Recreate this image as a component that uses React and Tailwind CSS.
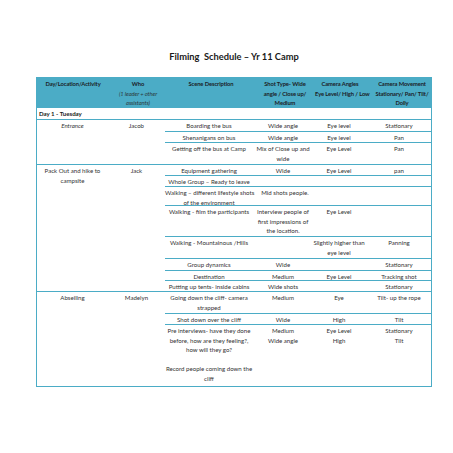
const LINE = 'border-[#4bacc6]'

const groups = [
  {
    activity: <span className="italic">Entrance</span>,
    who: 'Jacob',
    rows: [
      { h: 'h-[12px]', scene: 'Boarding the bus', shot: 'Wide angle', angle: 'Eye level', move: 'Stationary' },
      { h: 'h-[11px]', scene: 'Shenanigans on bus', shot: 'Wide angle', angle: 'Eye level', move: 'Pan' },
      { h: 'h-[21px]', scene: 'Getting off the bus at Camp', shot: ['Mix of Close up and', 'wide'], angle: 'Eye Level', move: 'Pan' },
    ],
  },
  {
    activity: ['Pack Out and hike to', 'campsite'],
    who: 'Jack',
    rows: [
      { h: 'h-[11px]', scene: 'Equipment gathering', shot: 'Wide', angle: 'Eye Level', move: 'pan' },
      { h: 'h-[11px]', scene: 'Whole Group – Ready to leave' },
      { h: 'h-[19px]', scene: ['Walking – different lifestyle shots', 'of the environment'], shot: 'Mid shots people.', shotPad: 'pl-[4px]' },
      { h: 'h-[31px]', scene: 'Walking -  film the participants', shot: ['Interview people of', 'first impressions of', 'the location.'], angle: 'Eye Level' },
      { h: 'h-[22px]', scene: 'Walking - Mountainous /Hills', angle: ['Slightly higher than', 'eye level'], move: 'Panning' },
      { h: 'h-[12px]', scene: 'Group dynamics', shot: 'Wide', move: 'Stationary' },
      { h: 'h-[10px]', scene: 'Destination', shot: 'Medium', angle: 'Eye Level', move: 'Tracking shot' },
      { h: 'h-[10px]', scene: 'Putting up tents- inside cabins', shot: 'Wide shots', move: 'Stationary' },
    ],
  },
  {
    activity: 'Abseiling',
    who: 'Madelyn',
    rows: [
      { h: 'h-[22px]', scene: ['Going down the cliff- camera', 'strapped'], shot: 'Medium', angle: 'Eye', move: 'Tilt- up the rope' },
      { h: 'h-[11px]', scene: 'Shot down over the cliff', shot: 'Wide', angle: 'High', move: 'Tilt' },
      {
        h: 'h-[61px]',
        scene: ['Pre interviews- have they done', 'before, how are they feeling?,', 'how will they go?', '\u00a0', 'Record people coming down the', 'cliff'],
        shot: ['Medium', 'Wide angle'],
        angle: ['Eye Level', 'High'],
        move: ['Stationary', 'Tilt'],
      },
    ],
  },
]

function Lines({ text }) {
  if (!text) return null
  if (!Array.isArray(text)) return <div>{text}</div>
  return text.map((t, i) => <div key={i}>{t}</div>)
}

function SubRow({ row, last }) {
  return (
    <div className={`grid grid-cols-[88px_60px_52px_66px] pt-[1px] ${row.h} ${last ? '' : `border-b ${LINE}`}`}>
      <div className="text-center whitespace-nowrap"><Lines text={row.scene} /></div>
      <div className={`text-center whitespace-nowrap ${row.shotPad ?? ''}`}><Lines text={row.shot} /></div>
      <div className="text-center whitespace-nowrap"><Lines text={row.angle} /></div>
      <div className="text-center whitespace-nowrap pl-[2px]"><Lines text={row.move} /></div>
    </div>
  )
}

export default function App() {
  return (
    <div className="w-[453px] h-[453px] bg-white font-[Lato,'Open_Sans',sans-serif] text-[#333] pt-[51px]">
      <div className="ml-[36px] w-[396px] text-center text-[9.3px] font-bold text-[#1a1a1a] leading-[12px]">
        Filming&nbsp; Schedule – Yr 11 Camp
      </div>

      <div className={`ml-[36px] mt-[14px] w-[396px] border-x ${LINE} text-[6.1px] leading-[9.6px]`}>
        <div className="grid grid-cols-[72px_58px_88px_60px_52px_66px] h-[31px] bg-[#4bacc6] pt-[2px] font-bold text-[#1c2226] text-[5.8px] tracking-[-0.1px]">
          <div className="text-center">Day/Location/Activity</div>
          <div className="text-center">
            <div>Who</div>
            <div className="italic font-normal text-[#2b3a40]">(1 leader + other</div>
            <div className="italic font-normal text-[#2b3a40]">assistants)</div>
          </div>
          <div className="text-center">Scene Description</div>
          <div className="text-center whitespace-nowrap">
            <div>Shot Type- Wide</div>
            <div>angle / Close up/</div>
            <div>Medium</div>
          </div>
          <div className="text-center whitespace-nowrap pr-[2px]">
            <div>Camera Angles</div>
            <div>Eye Level/ High / Low</div>
          </div>
          <div className="text-center whitespace-nowrap pl-[4px]">
            <div>Camera Movement</div>
            <div>Stationary/ Pan/ Tilt/</div>
            <div>Dolly</div>
          </div>
        </div>

        <div className={`h-[12px] border-b ${LINE} pt-[1px] pl-[2px] font-bold text-[#1a1a1a]`}>Day 1 - Tuesday</div>

        {groups.map((g, gi) => (
          <div key={gi} className={`flex border-b ${LINE}`}>
            <div className="w-[72px] pt-[1px] text-center whitespace-nowrap">
              <Lines text={g.activity} />
            </div>
            <div className="w-[58px] pt-[1px] text-center">{g.who}</div>
            <div className="flex flex-col w-[266px]">
              {g.rows.map((r, ri) => (
                <SubRow key={ri} row={r} last={ri === g.rows.length - 1} />
              ))}
            </div>
          </div>
        ))}
      </div>
    </div>
  )
}
